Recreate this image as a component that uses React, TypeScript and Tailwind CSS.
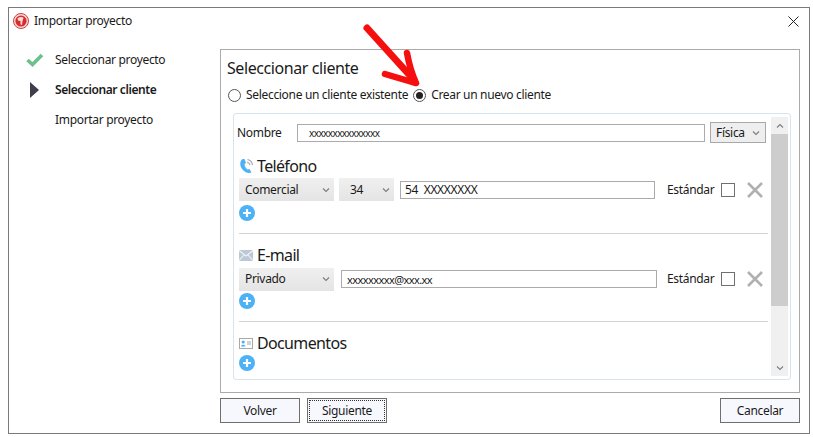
const Chevron = ({ className = "" }: { className?: string }) => (
  <svg width="8" height="6" viewBox="0 0 8 6" className={className} fill="none" stroke="#7d7d7d" strokeWidth="1.1"><path d="M1 1.5 L4 4.5 L7 1.5" /></svg>
);

const Select = ({ label, w, pad = "pl-[6px]" }: { label: string; w: string; pad?: string }) => (
  <div className={`${w} ${pad} h-[23px] bg-gradient-to-b from-[#f0f0f0] to-[#e4e4e4] flex items-center justify-between pr-[4px] shrink-0`}>
    <span>{label}</span>
    <Chevron />
  </div>
);

const Plus = () => (
  <svg width="16" height="16" viewBox="0 0 16 16" className="block">
    <circle cx="8" cy="8" r="8" fill="#4db2f5" />
    <path d="M8 4 V12 M4 8 H12" stroke="#fff" strokeWidth="2.2" />
  </svg>
);

const Cross = () => (
  <svg width="16" height="16" viewBox="0 0 16 16" className="block">
    <path d="M1 1 L15 15 M15 1 L1 15" stroke="#b0b0b0" strokeWidth="2.6" />
  </svg>
);

const Phone = () => (
  <svg width="15" height="16" viewBox="0 0 15 16" className="block" fill="none">
    <path d="M3.5 1 C0.5 3 0.5 8 3.5 11.5 C6.5 15 10 15.5 12.5 14.5 L10.5 11 L8.5 11.5 C7 10.5 5.5 8 5.5 6 L7 5 L5.5 1 Z" fill="#4db2f5" />
    <path d="M8 4 A4 4 0 0 1 11 7 M8.5 1.5 A6.5 6.5 0 0 1 13.5 7" stroke="#a8a8a8" strokeWidth="1.2" />
  </svg>
);

const Mail = () => (
  <svg width="14" height="11" viewBox="0 0 14 11" className="block">
    <rect width="14" height="11" fill="#bcc8d6" />
    <path d="M0 0.5 L7 6 L14 0.5 M0 10.5 L5 5 M14 10.5 L9 5" stroke="#f2f5f8" strokeWidth="1.1" fill="none" />
  </svg>
);

const IdCard = () => (
  <svg width="14" height="11" viewBox="0 0 14 11" className="block">
    <rect x="0.5" y="0.5" width="13" height="10" fill="#fff" stroke="#a9a9a9" />
    <circle cx="4.2" cy="4" r="1.6" fill="#4db2f5" />
    <path d="M2 8.5 C2 6 6.4 6 6.4 8.5 Z" fill="#4db2f5" />
    <path d="M8 4 H12 M8 6 H12" stroke="#a9a9a9" />
  </svg>
);

const Btn = ({ label, focus = false }: { label: string; focus?: boolean }) => (
  <div className="w-[80px] h-[25px] border border-[#6f6f6f] bg-[#f7f8fe] p-[1px] shrink-0">
    <div className={`h-full flex items-center justify-center border border-dotted ${focus ? "border-[#333]" : "border-transparent"}`}>{label}</div>
  </div>
);

const Field = ({ value, className }: { value: string; className: string }) => (
  <div className={`${className} h-[18px] border border-[#ababab] bg-white flex items-center shrink-0 overflow-hidden whitespace-pre`}>{value}</div>
);

const Standard = () => (
  <div className="flex items-center">
    <span className="w-[54px]">Estándar</span>
    <span className="w-[14px] h-[14px] border border-[#707070] bg-white block" />
    <span className="ml-[12px]"><Cross /></span>
  </div>
);

export default function App() {
  return (
    <div className="relative w-[813px] h-[437px] bg-white overflow-hidden pl-[8px] pt-[7px] text-[12px] leading-none text-[#1a1a1a] font-['Noto_Sans','Open_Sans',sans-serif] tracking-[-0.32px]">
      <div className="w-[802px] h-[427px] border border-[#7a7a7a] flex flex-col">
        <div className="h-[26px] flex items-center pl-[4px] pr-[10px] justify-between shrink-0">
          <div className="flex items-center gap-[5px]">
            <svg width="16" height="16" viewBox="0 0 16 16" className="block">
              <circle cx="8" cy="8" r="7.5" fill="#f6dada" stroke="#d83a3a" />
              <circle cx="8" cy="8" r="5.6" fill="#d82c2c" />
              <path d="M4.5 5.5 C6 3.5 10 3.5 10.5 5 L9.5 8 L9 12 L7.5 11.5 L7.5 8 L5 7.5 Z" fill="#f8dcdc" />
            </svg>
            <span>Importar proyecto</span>
          </div>
          <svg width="11" height="11" viewBox="0 0 11 11" className="block" stroke="#222" strokeWidth="1" fill="none"><path d="M0.5 0.5 L10.5 10.5 M10.5 0.5 L0.5 10.5" /></svg>
        </div>
        <div className="flex flex-1 min-h-0 pl-[17px] pr-[9px]">
          <div className="w-[194px] shrink-0 pt-[11px]">
            <div className="h-[30px] flex items-center">
              <svg width="18" height="14" viewBox="0 0 18 14" className="block"><path d="M1.5 7 L6.5 11.5 L16 2" stroke="#6cc08b" strokeWidth="3.6" fill="none" /></svg>
              <span className="ml-[11px]">Seleccionar proyecto</span>
            </div>
            <div className="h-[30px] flex items-center">
              <svg width="18" height="16" viewBox="0 0 18 16" className="block"><path d="M4 0 L13 8 L4 16 Z" fill="#3f3f4c" /></svg>
              <span className="ml-[11px] font-semibold tracking-[-0.42px]">Seleccionar cliente</span>
            </div>
            <div className="h-[30px] flex items-center pl-[29px]">Importar proyecto</div>
          </div>
          <div className="flex-1 flex flex-col min-w-0 pt-[15px]">
            <div className="h-[344px] border border-[#ababab] pl-[6px] pr-[8px] flex flex-col">
              <div className="text-[16px] leading-[22px] pt-[7px] h-[32px] tracking-[-0.42px]">Seleccionar cliente</div>
              <div className="flex items-center h-[22px] mt-[2px] pl-[1px]">
                <span className="w-[13px] h-[13px] rounded-full border border-[#555] bg-white" />
                <span className="ml-[5px]">Seleccione un cliente existente</span>
                <span className="ml-[5px] w-[13px] h-[13px] rounded-full border border-[#555] bg-white flex items-center justify-center">
                  <span className="w-[7px] h-[7px] rounded-full bg-[#222]" />
                </span>
                <span className="ml-[5px]">Crear un nuevo cliente</span>
              </div>
              <div className="mt-[7px] h-[267px] ml-[6px] border border-[#d9e3ec] rounded-[3px] flex pl-[3px] pt-[3px]">
                <div className="w-[531px] shrink-0">
                  <div className="h-[23px] mt-[4px] flex items-center">
                    <span className="w-[60px]">Nombre</span>
                    <Field value="xxxxxxxxxxxxxxx" className="w-[408px] text-[10px] pl-[11px] tracking-[-0.6px]" />
                    <div className="ml-[5px] w-[56px] h-[21px] bg-[#eeeeee] border border-[#a8a8a8] flex items-center justify-between pl-[5px] pr-[5px]">
                      <span>Física</span>
                      <Chevron />
                    </div>
                  </div>
                  <div className="pl-[2px]">
                    <div className="mt-[12px] h-[20px] flex items-center gap-[3px] text-[16px] tracking-[-0.65px]"><Phone /><span>Teléfono</span></div>
                    <div className="h-[23px] flex items-center mt-[2px]">
                      <Select label="Comercial" w="w-[95px]" />
                      <div className="w-[5px] shrink-0" />
                      <Select label="34" w="w-[55px]" pad="pl-[11px]" />
                      <Field value="54  XXXXXXXX" className="w-[255px] ml-[6px] pl-[4px]" />
                      <div className="ml-[12px]"><Standard /></div>
                    </div>
                    <div className="mt-[4px]"><Plus /></div>
                    <div className="mt-[12px] border-t border-[#d4d4d4]" />
                    <div className="mt-[11px] h-[20px] flex items-center gap-[4px] text-[16px] tracking-[-0.65px]"><Mail /><span>E-mail</span></div>
                    <div className="h-[22px] flex items-center mt-[3px]">
                      <Select label="Privado" w="w-[95px]" />
                      <Field value="xxxxxxxxx@xxx.xx" className="w-[316px] ml-[7px] pl-[5px] text-[11px] tracking-[-0.58px]" />
                      <div className="ml-[10px]"><Standard /></div>
                    </div>
                    <div className="mt-[3px]"><Plus /></div>
                    <div className="mt-[12px] border-t border-[#d4d4d4]" />
                    <div className="mt-[11px] h-[20px] flex items-center gap-[4px] text-[16px] tracking-[-0.65px]"><IdCard /><span>Documentos</span></div>
                    <div className="mt-[2px]"><Plus /></div>
                  </div>
                </div>
                <div className="w-[17px] ml-[3px] h-[259px] bg-[#f0f0f0] flex flex-col shrink-0">
                  <div className="h-[17px] flex items-center justify-center"><Chevron className="rotate-180" /></div>
                  <div className="h-[172px] bg-[#cdcdcd]" />
                  <div className="flex-1" />
                  <div className="h-[17px] flex items-center justify-center"><Chevron /></div>
                </div>
              </div>
            </div>
            <div className="flex items-center mt-[5px]">
              <Btn label="Volver" />
              <div className="ml-[7px]"><Btn label="Siguiente" focus /></div>
              <div className="ml-auto"><Btn label="Cancelar" /></div>
            </div>
          </div>
        </div>
      </div>
      <svg className="absolute left-[358px] top-[22px]" width="66" height="70" viewBox="0 0 66 70" fill="none" stroke="#f50f0f" strokeLinecap="round" strokeLinejoin="round">
        <path d="M9 6 L56 58" strokeWidth="7" />
        <path d="M49 31 C51 42 53 50 58 61 C47 58 37 55 27 52" strokeWidth="6.5" />
      </svg>
    </div>
  );
}
